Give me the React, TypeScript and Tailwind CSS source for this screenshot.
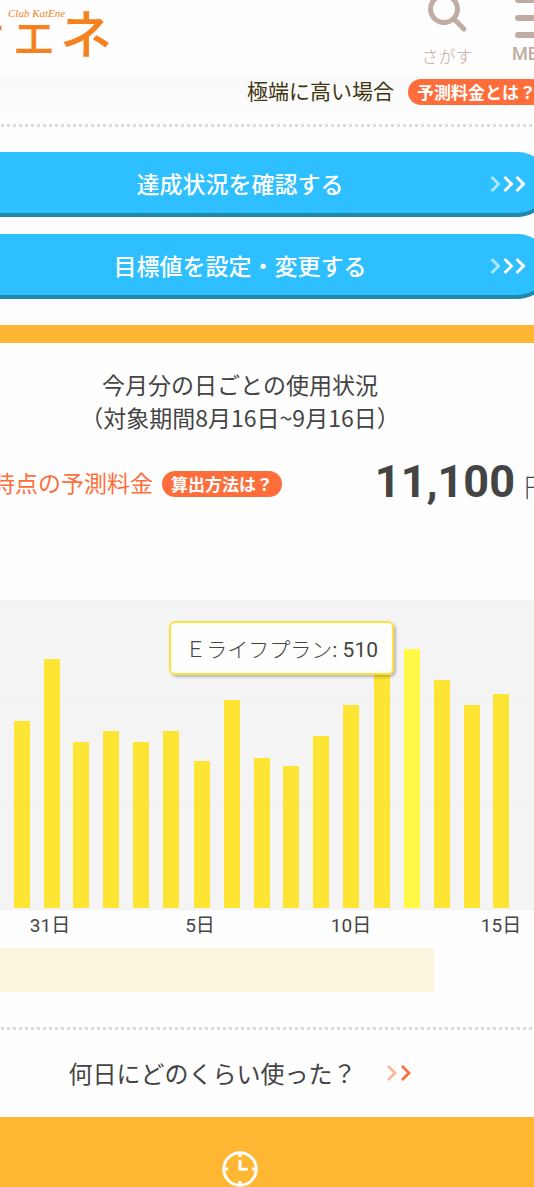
import React from 'react';

interface Bar {
  x: number;
  height: number;
  active?: boolean;
}

interface AxisLabel {
  x: number;
  text: string;
}

const CHART_WIDTH = 588;
const CHART_BOTTOM = 308;

const bars: Bar[] = [
  { x: 68, height: 187 },
  { x: 98, height: 249 },
  { x: 127, height: 166 },
  { x: 157, height: 177 },
  { x: 187, height: 166 },
  { x: 217, height: 177 },
  { x: 248, height: 147 },
  { x: 278, height: 208 },
  { x: 308, height: 150 },
  { x: 337, height: 142 },
  { x: 367, height: 172 },
  { x: 397, height: 203 },
  { x: 428, height: 237 },
  { x: 458, height: 259, active: true },
  { x: 488, height: 228 },
  { x: 518, height: 203 },
  { x: 547, height: 214 },
];

const axisLabels: AxisLabel[] = [
  { x: 104, text: '31日' },
  { x: 254, text: '5日' },
  { x: 405, text: '10日' },
  { x: 555, text: '15日' },
];

const Logo: React.FC = () => (
  <svg width="112" height="76" viewBox="0 0 112 76" fill="#f5821f" role="img" aria-label="カテエネ">
    <g fontFamily="'Noto Sans CJK JP', sans-serif" fontWeight="500">
      <text x="-39" y="48" fontSize="44">テ</text>
      <text x="13" y="54" fontSize="42">エ</text>
      <text x="60" y="54" fontSize="52">ネ</text>
    </g>
    <text
      x="8"
      y="17"
      fontSize="11"
      fontStyle="italic"
      fontFamily="'Liberation Serif', serif"
    >
      Club KatEne
    </text>
  </svg>
);

const SearchIcon: React.FC = () => (
  <svg width="50" height="44" viewBox="0 0 50 44" fill="none" stroke="#c0aca2" strokeWidth="5">
    <circle cx="22" cy="9" r="13.5" />
    <path d="M32 19 L42 29" strokeLinecap="round" />
  </svg>
);

const MenuIcon: React.FC = () => (
  <svg width="38" height="44" viewBox="0 0 38 44" stroke="#c0aca2" strokeWidth="6" strokeLinecap="round">
    <path d="M3 0 H35 M3 18 H35 M3 35 H35" />
  </svg>
);

const ClockIcon: React.FC = () => (
  <svg width="36" height="36" viewBox="0 0 36 36" fill="none" stroke="#fff" strokeWidth="3">
    <circle cx="18" cy="18" r="16.2" />
    <path d="M18 2 V6 M18 30 V34 M2 18 H6 M30 18 H34" />
    <path d="M18 10 V18.2 H24.5" strokeLinecap="round" strokeLinejoin="round" />
  </svg>
);

const TripleChevron: React.FC = () => (
  <svg width="36" height="16" viewBox="0 0 36 16" fill="none" stroke="#fff" strokeWidth="3">
    <path d="M1.5 1 L8.5 8 L1.5 15" opacity="0.6" />
    <path d="M14.5 1 L21.5 8 L14.5 15" />
    <path d="M26.5 1 L33.5 8 L26.5 15" />
  </svg>
);

const DoubleChevron: React.FC = () => (
  <svg width="26" height="16" viewBox="0 0 26 16" fill="none" stroke="#ff6e3a" strokeWidth="2.8">
    <path d="M2 1 L9 8 L2 15" opacity="0.5" />
    <path d="M16 1 L23 8 L16 15" />
  </svg>
);

const DottedLine: React.FC = () => (
  <div className="h-[3px] bg-[repeating-linear-gradient(90deg,transparent_0_1px,#dcdcdc_1px_4px,transparent_4px_6px)]" />
);

const HelpBadge: React.FC<{ children: React.ReactNode }> = ({ children }) => (
  <button className="h-[26px] shrink-0 rounded-full bg-[#ff6e3a] px-[9px] text-[17px] leading-[26px] font-bold text-white">
    {children}
  </button>
);

const ActionButton: React.FC<{ children: React.ReactNode }> = ({ children }) => (
  <button className="relative -mx-4 h-[65px] rounded-full bg-[#2dbfff] pb-[3px] text-[23px] leading-8 font-medium text-white shadow-[inset_0_-4px_0_#2087ad]">
    {children}
    <span className="absolute top-6 right-6">
      <TripleChevron />
    </span>
  </button>
);

const UsageChart: React.FC = () => (
  <div className="relative">
    <svg className="block w-full" viewBox={`0 0 ${CHART_WIDTH} 342`}>
      <rect width={CHART_WIDTH} height="310" fill="#f4f4f4" />
      <path d={`M0 .5 H${CHART_WIDTH} M0 103.5 H${CHART_WIDTH} M0 206.5 H${CHART_WIDTH} M0 309.5 H${CHART_WIDTH}`} stroke="#f1f1f1" />
      {bars.map((bar) => (
        <rect
          key={bar.x}
          x={bar.x}
          y={CHART_BOTTOM - bar.height}
          width="16"
          height={bar.height}
          fill={bar.active ? '#fff845' : '#fee433'}
        />
      ))}
      <g fill="#444" fontSize="19" textAnchor="middle" fontFamily="Roboto, 'Noto Sans CJK JP', sans-serif">
        {axisLabels.map((label) => (
          <text key={label.text} x={label.x} y="332">
            {label.text}
          </text>
        ))}
      </g>
    </svg>
    <div className="absolute top-[21px] right-[140px] rounded-md border-2 border-[#fee040] bg-[#fefefc]/95 px-[14px] pt-[13px] pb-[9px] font-[Roboto,'Noto_Sans_CJK_JP',sans-serif] text-[21px] leading-7 whitespace-nowrap shadow-[2px_2px_3px_rgba(0,0,0,0.25)]">
      <span className="font-light">Ｅライフプラン</span>: 510
    </div>
  </div>
);

export default function App() {
  return (
    <div className="min-h-screen overflow-hidden bg-[#fefefe] font-['Noto_Sans_CJK_JP',sans-serif] text-[#444]">
      <header className="flex h-[76px] justify-between">
        <a href="#">
          <Logo />
        </a>
        <nav className="-mr-8 flex gap-5 text-[#c0aca2]">
          <button className="flex w-[70px] flex-col items-center">
            <SearchIcon />
            <span className="text-[17px] leading-6 font-light">さがす</span>
          </button>
          <button className="flex w-16 flex-col items-start pl-[10px]">
            <span className="pl-[3px]">
              <MenuIcon />
            </span>
            <span className="font-[Roboto,sans-serif] text-lg leading-5 font-medium">MENU</span>
          </button>
        </nav>
      </header>

      <main className="-ml-[54px]">
        <section className="bg-linear-to-b from-[#f9f9f9] to-[#fefefe] pt-[3px] pb-[19px]">
          <div className="-mr-[11px] flex items-start justify-end gap-[14px]">
            <span className="text-[21px] leading-[22px] text-[#3f3510]">極端に高い場合</span>
            <HelpBadge>予測料金とは？</HelpBadge>
          </div>
        </section>

        <DottedLine />

        <div className="flex flex-col gap-[17px] pt-[25px] pb-[26px]">
          <ActionButton>達成状況を確認する</ActionButton>
          <ActionButton>目標値を設定・変更する</ActionButton>
        </div>

        <section className="border-t-[18px] border-[#ffb632] pt-[25px]">
          <h2 className="text-center text-[23px] leading-[33px]">
            今月分の日ごとの使用状況
            <br />
            （対象期間8月16日~9月16日）
          </h2>

          <div className="-mr-4 flex items-center justify-between pt-[25px] pb-[91px] pl-[46px]">
            <div className="flex items-center gap-[9px]">
              <span className="pb-1 text-[23px] leading-[46px] text-[#ff6e3a]">時点の予測料金</span>
              <HelpBadge>算出方法は？</HelpBadge>
            </div>
            <div className="flex items-baseline gap-[9px] pb-1">
              <span className="font-[Roboto,sans-serif] text-[45px] leading-[46px] font-bold">11,100</span>
              <span className="text-[26px] leading-8 font-light">円</span>
            </div>
          </div>

          <UsageChart />

          <div className="mt-[6px] mr-[100px] h-11 bg-[#fcf5de]" />
        </section>

        <div className="pt-[35px]">
          <DottedLine />
          <a href="#" className="flex items-center justify-center gap-[29px] pt-[26px] pb-7 text-2xl leading-[33px]">
            何日にどのくらい使った？
            <DoubleChevron />
          </a>
        </div>

        <section className="flex justify-center bg-[#ffb632] pt-[34px]">
          <ClockIcon />
        </section>
      </main>
    </div>
  );
}
